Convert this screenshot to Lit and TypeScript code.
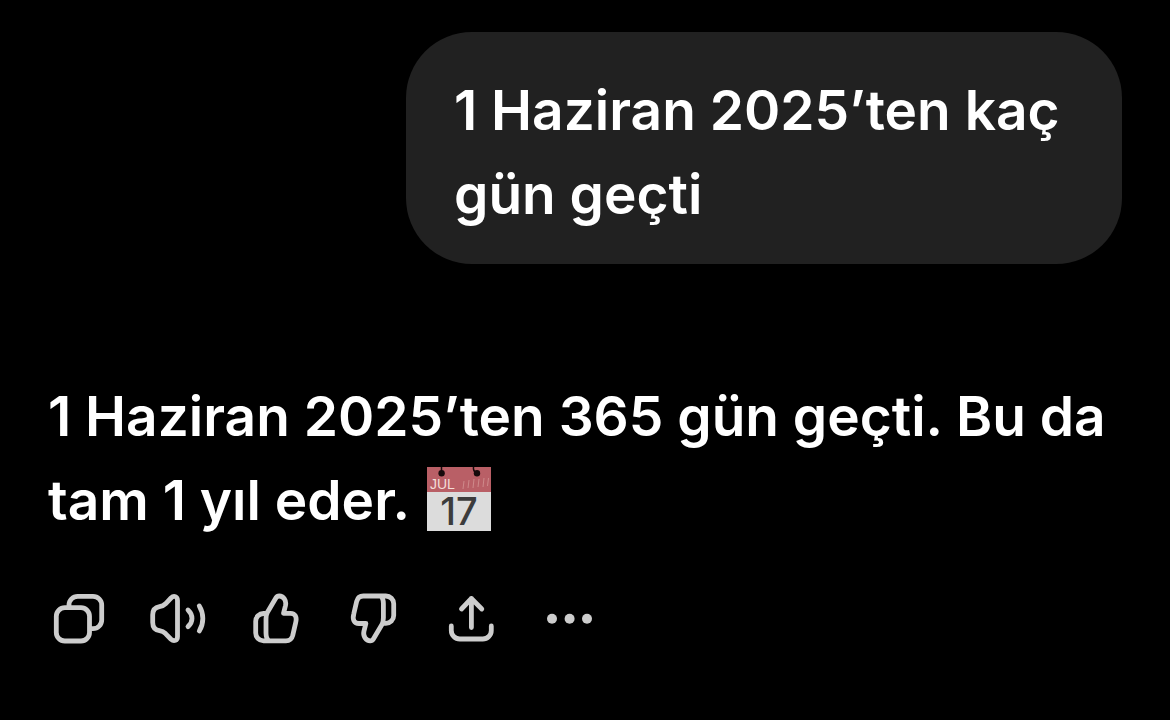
import { LitElement, html, css, svg } from "lit";
import { customElement } from "lit/decorators.js";

const thumb = svg`
  <path d="M20.5 23.5H17.500a7.800 7.800 0 0 0-7.800 7.800V43a7.800 7.800 0 0 0 7.800 7.800H40C43.700 50.800 45.800 49 46.700 45.500L49.600 33C51.200 27 49.200 23.300 44.500 23.300H37.500L39.500 15.500C40.600 10.500 37.500 6 33.200 6C31.700 6 30.700 6.600 30 7.800L21.300 22.500C20.300 24.500 20 26.500 20 29V43C20 46.500 20.800 49.300 23 50.800"/>`;

const icons = {
  copy: svg`
    <rect x="6.300" y="17.700" width="33.200" height="33.300" rx="8.500"/>
    <path d="M19 17v-2a8.700 8.700 0 0 1 8.700-8.700H43a8.700 8.700 0 0 1 8.700 8.700v15a8.700 8.700 0 0 1-8.700 8.700h-2.500"/>`,
  speak: svg`
    <path d="M4.700 25C4.700 20 7.200 17.400 11.500 16.700C14.500 16.200 15.500 15.800 17.500 13.800L23 8C26 5 29.500 6.500 29.500 10.500V46.500C29.500 50.500 26 52 23 49.200L17.500 43.600C15.500 41.700 14.500 41.200 11.500 40.700C7.200 40 4.700 37.400 4.700 32.500Z"/>
    <path d="M40 20C45.300 25 45.300 31.800 40 36.600M51.300 15.900C56 23.500 56 33.500 51.300 41"/>`,
  up: thumb,
  down: svg`<g transform="rotate(180 29.700 28.400)">${thumb}</g>`,
  share: svg`
    <path d="M29.400 37.500V8.500M19.500 19L29.400 8.500L39.800 19M9.300 36V40.500a8.500 8.500 0 0 0 8.500 8.500H40.800a8.500 8.500 0 0 0 8.500-8.500V36"/>`,
  more: svg`
    <g fill="currentColor" stroke="none">
      <circle cx="12" cy="28.700" r="5"/><circle cx="29.600" cy="28.700" r="5"/><circle cx="47" cy="28.700" r="5"/>
    </g>`,
};

const actions = [
  { label: "Kopyala", icon: icons.copy },
  { label: "Sesli oku", icon: icons.speak },
  { label: "İyi yanıt", icon: icons.up },
  { label: "Kötü yanıt", icon: icons.down },
  { label: "Paylaş", icon: icons.share },
  { label: "Diğer", icon: icons.more },
];

@customElement("app-root")
export class AppRoot extends LitElement {
  static styles = css`
    :host {
      display: block;
      box-sizing: border-box;
      min-height: 100vh;
      padding: 32px 48px;
      background: #000;
      color: #fff;
      font: 600 55px/84px Inter, "Liberation Sans", sans-serif;
    }
    .chat {
      display: flex;
      flex-direction: column;
    }
    p {
      margin: 0;
    }
    .question {
      align-self: flex-end;
      box-sizing: border-box;
      max-width: calc(200% / 3);
      padding: 36px 48px 28px;
      border-radius: 66px;
      background: #212121;
    }
    .answer {
      margin-top: 110px;
    }
    .calendar {
      width: 64px;
      height: 64px;
      margin-left: 4px;
      vertical-align: -11px;
      overflow: visible;
    }
    .month {
      font: 400 14px/16px "Liberation Sans", sans-serif;
      fill: #f3dcd6;
    }
    .day {
      font: 500 38px/40px Inter, sans-serif;
      fill: #3c3c3c;
    }
    .actions {
      display: flex;
      gap: 40px;
      margin: 48px 2px 0;
    }
    .action {
      width: 58px;
      height: 58px;
      padding: 0;
      border: 0;
      background: none;
      color: #cdcdcd;
      cursor: pointer;
    }
    .icon {
      display: block;
      width: 58px;
      height: 58px;
      fill: none;
      stroke: currentColor;
      stroke-width: 4.8;
      stroke-linecap: round;
      stroke-linejoin: round;
    }
  `;

  private calendar() {
    return html`<svg class="calendar" viewBox="0 0 64 64" role="img" aria-label="Takvim">
      <rect width="64" height="64" fill="#dcdcdc" />
      <rect width="64" height="25" fill="#b95f66" />
      <text class="month" x="3" y="22">JUL</text>
      <path d="M37 14l-1 8M42 13l-1 8M47 12l-1 9M52 12l-1 8M57 11l-1 9M61.500 11l-1 8" stroke="#cf8a8b" stroke-width="1" />
      <path d="M14.500 0V6M46.500 0C46 3 47.500 5 50 6" fill="none" stroke="#160a0b" stroke-width="1.500" />
      <circle cx="14.600" cy="6.300" r="3.200" fill="#160a0b" />
      <circle cx="50" cy="6.300" r="3.200" fill="#160a0b" />
      <text class="day" x="32" y="58" text-anchor="middle">17</text>
    </svg>`;
  }

  render() {
    return html`<main class="chat">
      <p class="question">1 Haziran 2025’ten kaç gün geçti</p>
      <p class="answer">1 Haziran 2025’ten 365 gün geçti. Bu da tam 1 yıl eder. ${this.calendar()}</p>
      <div class="actions">
        ${actions.map(
          (a) => html`<button class="action" type="button" aria-label=${a.label}>
            <svg class="icon" viewBox="0 0 58 58" aria-hidden="true">${a.icon}</svg>
          </button>`
        )}
      </div>
    </main>`;
  }
}
